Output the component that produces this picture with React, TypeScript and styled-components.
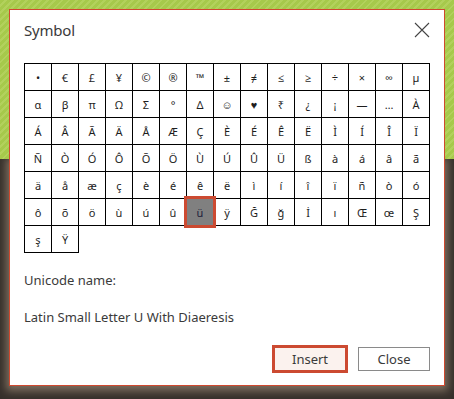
import styled, { createGlobalStyle } from "styled-components";

const GlobalStyle = createGlobalStyle`
  html, body {
    margin: 0;
    padding: 0;
  }
  body {
    font-family: "Noto Sans", "Open Sans", sans-serif;
  }
`;

const SYMBOLS: string[] = [
  "•", "€", "£", "¥", "©", "®", "™", "±", "≠", "≤", "≥", "÷", "×", "∞", "µ",
  "α", "β", "π", "Ω", "Σ", "°", "Δ", "☺", "♥", "₹", "¿", "¡", "—", "…", "À",
  "Á", "Â", "Ã", "Ä", "Å", "Æ", "Ç", "È", "É", "Ê", "Ë", "Ì", "Í", "Î", "Ï",
  "Ñ", "Ò", "Ó", "Ô", "Õ", "Ö", "Ù", "Ú", "Û", "Ü", "ß", "à", "á", "â", "ã",
  "ä", "å", "æ", "ç", "è", "é", "ê", "ë", "ì", "í", "î", "ï", "ñ", "ò", "ó",
  "ô", "õ", "ö", "ù", "ú", "û", "ü", "ÿ", "Ğ", "ğ", "İ", "ı", "Œ", "œ", "Ş",
  "ş", "Ÿ",
];

const SELECTED = "ü";

// 背景: 上が緑のストライプ、下が暗いブラウン
const Page = styled.div`
  position: relative;
  z-index: 0;
  width: 454px;
  height: 399px;
  overflow: hidden;
  background:
    linear-gradient(to bottom, transparent 159px, #36302b 159px),
    repeating-linear-gradient(
      -45deg,
      #a6c94b 0px,
      #a6c94b 3px,
      #b2d15c 3px,
      #b2d15c 5px
    );
`;

const Dialog = styled.div`
  position: absolute;
  left: 9px;
  top: 9px;
  width: 434px;
  border: 1px solid #d0492f;
  background: #fff;
  padding: 0 14px 14px 14px;
  box-sizing: border-box;
  width: 436px;
  display: flex;
  flex-direction: column;

  &::before {
    content: "";
    position: absolute;
    left: -1px;
    right: -1px;
    top: 149px;
    bottom: -1px;
    box-shadow: 0 2px 8px 3px rgba(140, 122, 104, 0.85);
    clip-path: inset(0 -20px -20px -20px);
    z-index: -1;
  }
`;

const Header = styled.div`
  height: 40px;
  display: flex;
  align-items: center;
  justify-content: space-between;
`;

const Title = styled.h2`
  margin: 0;
  font-size: 15px;
  font-weight: 400;
  color: #3a3a3a;
  letter-spacing: -0.2px;
`;

const CloseIcon = styled.button`
  width: 17px;
  height: 17px;
  padding: 0;
  margin-right: 0;
  border: none;
  background: none;
  display: flex;
  align-items: center;
  justify-content: center;
  cursor: pointer;
`;

const Grid = styled.div`
  margin-top: 13px;
  display: grid;
  grid-template-columns: repeat(15, 26px);
  grid-auto-rows: 26px;
  gap: 1px;
  padding: 1px;
  align-self: flex-start;
`;

const Cell = styled.div<{ $selected: boolean }>`
  position: relative;
  z-index: ${({ $selected }) => ($selected ? 1 : 0)};
  display: flex;
  align-items: center;
  justify-content: center;
  outline: ${({ $selected }) =>
    $selected ? "3px solid #cc4a31" : "1px solid #000"};
  background: ${({ $selected }) => ($selected ? "#808080" : "#fff")};
  font-size: 11px;
  color: ${({ $selected }) => ($selected ? "#1c1c3a" : "#1e1e1e")};
  line-height: 1;
`;

const Label = styled.div`
  margin-top: 18px;
  height: 18px;
  line-height: 18px;
  font-size: 13px;
  color: #3a3a3a;
`;

const NameText = styled(Label)`
  margin-top: 19px;
`;

const Footer = styled.div`
  margin-top: 21px;
  display: flex;
  justify-content: flex-end;
  gap: 12px;
`;

const Button = styled.button<{ $primary?: boolean }>`
  width: 72px;
  height: 24px;
  box-sizing: border-box;
  border: 1px solid ${({ $primary }) => ($primary ? "#cc4a31" : "#8a8a8a")};
  outline: ${({ $primary }) => ($primary ? "2px solid #cc4a31" : "none")};
  background: ${({ $primary }) => ($primary ? "#fbf2ee" : "#fff")};
  font-family: "Noto Sans", "Open Sans", sans-serif;
  font-size: 13px;
  color: #3a3a3a;
  padding: 0;
  cursor: pointer;
`;

export default function App() {
  return (
    <>
      <GlobalStyle />
      <Page>
        <Dialog>
          <Header>
            <Title>Symbol</Title>
            <CloseIcon aria-label="Close">
              <svg width="16" height="16" viewBox="0 0 16 16">
                <path
                  d="M1 1 L15 15 M15 1 L1 15"
                  stroke="#444"
                  strokeWidth="1.1"
                  fill="none"
                />
              </svg>
            </CloseIcon>
          </Header>
          <Grid>
            {SYMBOLS.map((s, i) => (
              <Cell key={i} $selected={s === SELECTED}>
                {s}
              </Cell>
            ))}
          </Grid>
          <Label>Unicode name:</Label>
          <NameText>Latin Small Letter U With Diaeresis</NameText>
          <Footer>
            <Button $primary>Insert</Button>
            <Button>Close</Button>
          </Footer>
        </Dialog>
      </Page>
    </>
  );
}
